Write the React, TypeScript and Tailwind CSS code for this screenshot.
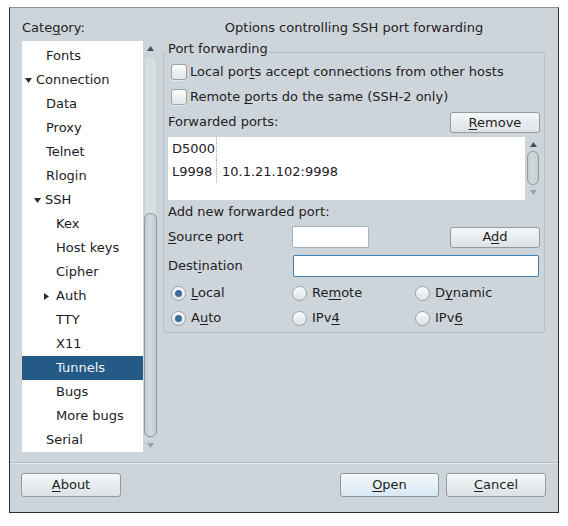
import React from "react";

const U = ({ c }: { c: string }) => <span className="underline underline-offset-[2px]">{c}</span>;

function Check() {
  return (
    <span className="block w-[16px] h-[16px] rounded-[3px] border border-[#9aa2a8] bg-linear-to-b from-[#fbfcfc] to-[#e1e6e9] shadow-[0_1px_0_rgba(255,255,255,0.5)]" />
  );
}

function Radio({ on }: { on?: boolean }) {
  return (
    <span className="flex items-center justify-center w-[15px] h-[15px] rounded-full border border-[#9aa2a8] bg-linear-to-b from-[#fbfcfc] to-[#dee3e6]">
      {on && <span className="block w-[7px] h-[7px] rounded-full bg-[#3b6e9b]" />}
    </span>
  );
}

function Btn({ children, className = "", def }: { children: React.ReactNode; className?: string; def?: boolean }) {
  return (
    <div
      className={
        "flex items-center justify-center rounded-[3px] border text-[#1c1f22] " +
        (def
          ? "border-[#8b98a4] bg-linear-to-b from-[#f6f9fb] to-[#d9e8f4] "
          : "border-[#939ba1] bg-linear-to-b from-[#f5f7f8] to-[#dde2e5] ") +
        className
      }
    >
      {children}
    </div>
  );
}

function Down() {
  return (
    <svg width="7" height="5" viewBox="0 0 7 5">
      <path d="M0 0h7L3.5 5z" fill="#2a2d30" />
    </svg>
  );
}

function Right() {
  return (
    <svg width="5" height="7" viewBox="0 0 5 7">
      <path d="M0 0v7L5 3.5z" fill="#2a2d30" />
    </svg>
  );
}

function SmallArrow({ up }: { up?: boolean }) {
  return (
    <svg width="7" height="5" viewBox="0 0 7 5">
      <path d={up ? "M0 5h7L3.5 0z" : "M0 0h7L3.5 5z"} fill={up ? "#4a5055" : "#9aa2a8"} />
    </svg>
  );
}

type Node = { label: string; pl: number; arrow?: "down" | "right"; sel?: boolean };

const tree: Node[] = [
  { label: "Fonts", pl: 24 },
  { label: "Connection", pl: 3, arrow: "down" },
  { label: "Data", pl: 24 },
  { label: "Proxy", pl: 24 },
  { label: "Telnet", pl: 24 },
  { label: "Rlogin", pl: 24 },
  { label: "SSH", pl: 12, arrow: "down" },
  { label: "Kex", pl: 34 },
  { label: "Host keys", pl: 34 },
  { label: "Cipher", pl: 34 },
  { label: "Auth", pl: 22, arrow: "right" },
  { label: "TTY", pl: 34 },
  { label: "X11", pl: 34 },
  { label: "Tunnels", pl: 34, sel: true },
  { label: "Bugs", pl: 34 },
  { label: "More bugs", pl: 34 },
  { label: "Serial", pl: 24 },
];

export default function App() {
  return (
    <div
      className="w-[568px] h-[526px] bg-white pt-[7px] pl-[9px] text-[13px] text-[#1e2124]"
      style={{ fontFamily: '"DejaVu Sans", "Liberation Sans", sans-serif' }}
    >
      <div className="w-[550px] h-[506px] border border-[#2e3133] border-t-[#8c9195] bg-[#ced5da] flex flex-col">
        <div className="flex pl-[12px] pt-[12px] gap-[6px]">
          {/* category tree */}
          <div className="w-[135px] flex flex-col">
            <div className="h-[21px] leading-[16px]">
              Cate<U c="g" />ory:
            </div>
            <div className="flex h-[411px]">
              <div className="w-[121px] bg-white pt-[3px] overflow-hidden">
                {tree.map((n) => (
                  <div
                    key={n.label}
                    className={
                      "h-[24px] flex items-center " + (n.sel ? "bg-[#255a87] text-[#eef3f7]" : "")
                    }
                    style={{ paddingLeft: n.pl }}
                  >
                    {n.arrow === "down" && (
                      <span className="w-[11px] flex items-center">
                        <Down />
                      </span>
                    )}
                    {n.arrow === "right" && (
                      <span className="w-[12px] flex items-center">
                        <Right />
                      </span>
                    )}
                    <span>{n.label}</span>
                  </div>
                ))}
              </div>
              <div className="w-[14px] flex flex-col items-center">
                <div className="h-[15px] flex items-center justify-center">
                  <SmallArrow up />
                </div>
                <div className="w-[13px] h-[382px] rounded-[6px] bg-[#d7dee2] border border-[#c9d0d5] flex flex-col">
                  <div className="h-[156px]" />
                  <div className="flex-1 -mx-[1px] rounded-[6px] border border-[#8f989e] bg-linear-to-r from-[#c3cbd0] via-[#d3dade] to-[#c3cbd0]" />
                </div>
                <div className="flex-1 flex items-center justify-center">
                  <SmallArrow />
                </div>
              </div>
            </div>
          </div>

          {/* options panel */}
          <div className="w-[382px] flex flex-col">
            <div className="h-[21px] leading-[16px] text-center">Options controlling SSH port forwarding</div>
            <div className="relative mt-[11px] h-[281px] rounded-[3px] border border-[#b7bfc4] pl-[4px] pr-[3px] flex flex-col">
              <div className="absolute -top-[12px] left-[3px] px-[1px] leading-[16px] bg-[#ced5da]">Port forwarding</div>

              <div className="mt-[7px] h-[24px] flex items-center ml-[3px] gap-[3px]">
                <Check />
                <span>
                  Local por<U c="t" />s accept connections from other hosts
                </span>
              </div>
              <div className="mt-[1px] h-[24px] flex items-center ml-[3px] gap-[3px]">
                <Check />
                <span>
                  Remote <U c="p" />orts do the same (SSH-2 only)
                </span>
              </div>

              <div className="mt-[1px] h-[23px] flex items-center justify-between">
                <span>Forwarded ports:</span>
                <Btn className="w-[90px] h-[21px] mr-[1px] mt-[2px]">
                  <span>
                    <U c="R" />emove
                  </span>
                </Btn>
              </div>

              <div className="mt-[4px] h-[63px] flex">
                <div className="flex-1 bg-white">
                  {[
                    ["D5000", ""],
                    ["L9998", "10.1.21.102:9998"],
                  ].map(([a, b]) => (
                    <div key={a} className="h-[23px] flex items-center">
                      <span className="w-[49px] pl-[4px] h-full flex items-center border-r border-dotted border-[#9aa0a5]">
                        {a}
                      </span>
                      <span className="pl-[5px]">{b}</span>
                    </div>
                  ))}
                </div>
                <div className="w-[16px] flex flex-col items-center">
                  <div className="h-[14px] flex items-center justify-center">
                    <SmallArrow up />
                  </div>
                  <div className="w-[12px] h-[34px] rounded-[6px] border border-[#8f989e] bg-linear-to-r from-[#c3cbd0] via-[#d3dade] to-[#c3cbd0]" />
                  <div className="flex-1 flex items-center justify-center">
                    <SmallArrow />
                  </div>
                </div>
              </div>

              <div className="mt-[3px] h-[18px] flex items-center">Add new forwarded port:</div>

              <div className="mt-[4px] h-[24px] flex items-center">
                <span className="w-[124px]">
                  <U c="S" />ource port
                </span>
                <span className="block w-[77px] h-[22px] bg-white border border-[#a9b1b6] rounded-[2px]" />
                <Btn className="ml-auto mr-[1px] w-[90px] h-[21px]">
                  <span>
                    A<U c="d" />d
                  </span>
                </Btn>
              </div>

              <div className="mt-[5px] h-[24px] flex items-center">
                <span className="w-[125px]">
                  Dest<U c="i" />nation
                </span>
                <span className="block w-[246px] h-[22px] bg-white border border-[#3d7fb3] rounded-[2px]" />
              </div>

              <div className="mt-[3px] h-[24px] flex items-center ml-[3px]">
                <span className="w-[121px] flex items-center gap-[5px]">
                  <Radio on />
                  <span>
                    <U c="L" />ocal
                  </span>
                </span>
                <span className="w-[123px] flex items-center gap-[5px]">
                  <Radio />
                  <span>
                    Re<U c="m" />ote
                  </span>
                </span>
                <span className="flex items-center gap-[5px]">
                  <Radio />
                  <span>
                    D<U c="y" />namic
                  </span>
                </span>
              </div>
              <div className="mt-[1px] h-[24px] flex items-center ml-[3px]">
                <span className="w-[121px] flex items-center gap-[5px]">
                  <Radio on />
                  <span>
                    A<U c="u" />to
                  </span>
                </span>
                <span className="w-[123px] flex items-center gap-[5px]">
                  <Radio />
                  <span>
                    IPv<U c="4" />
                  </span>
                </span>
                <span className="flex items-center gap-[5px]">
                  <Radio />
                  <span>
                    IPv<U c="6" />
                  </span>
                </span>
              </div>
            </div>
          </div>
        </div>

        <div className="mt-[10px] h-[2px] border-t border-[#b3bbc0] border-b border-b-[#e2e7ea]" />

        <div className="mt-[9px] flex pl-[11px]">
          <Btn className="w-[100px] h-[24px]">
            <span>
              <U c="A" />bout
            </span>
          </Btn>
          <Btn def className="ml-[219px] w-[99px] h-[24px]">
            <span>
              <U c="O" />pen
            </span>
          </Btn>
          <Btn className="ml-[7px] w-[100px] h-[24px]">
            <span>
              <U c="C" />ancel
            </span>
          </Btn>
        </div>
      </div>
    </div>
  );
}
